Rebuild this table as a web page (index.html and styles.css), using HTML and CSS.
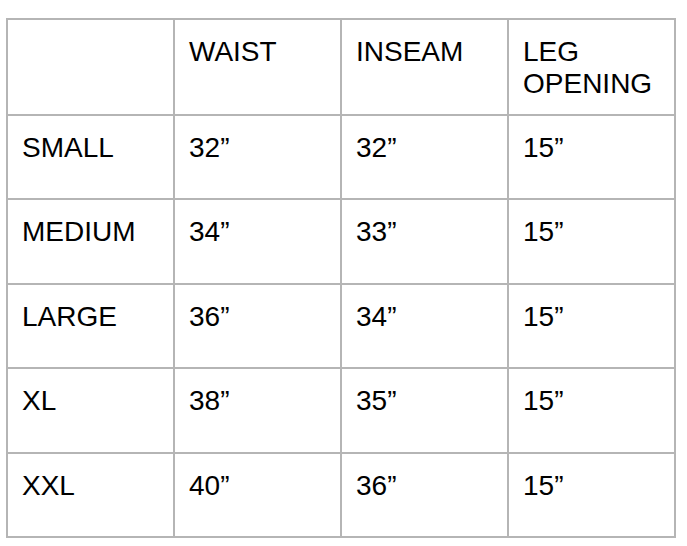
FILE: index.html
```html
<!DOCTYPE html>
<html>
<head>
<meta charset="utf-8">
<link rel="stylesheet" href="styles.css">
</head>
<body>
<div class="size-table">
  <div class="cell"></div>
  <div class="cell">WAIST</div>
  <div class="cell">INSEAM</div>
  <div class="cell">LEG<br>OPENING</div>

  <div class="cell">SMALL</div>
  <div class="cell">32”</div>
  <div class="cell">32”</div>
  <div class="cell">15”</div>

  <div class="cell">MEDIUM</div>
  <div class="cell">34”</div>
  <div class="cell">33”</div>
  <div class="cell">15”</div>

  <div class="cell">LARGE</div>
  <div class="cell">36”</div>
  <div class="cell">34”</div>
  <div class="cell">15”</div>

  <div class="cell">XL</div>
  <div class="cell">38”</div>
  <div class="cell">35”</div>
  <div class="cell">15”</div>

  <div class="cell">XXL</div>
  <div class="cell">40”</div>
  <div class="cell">36”</div>
  <div class="cell">15”</div>
</div>
</body>
</html>
```
FILE: styles.css
```css
html, body {
  margin: 0;
  padding: 0;
  background: #ffffff;
}
body {
  padding: 18px 0 0 6px;
  font-family: "Liberation Sans", Arial, sans-serif;
  color: #000000;
}
.size-table {
  display: grid;
  grid-template-columns: repeat(4, 167px);
  grid-template-rows: 96px 84px 85px 84px 85px 84px;
  width: max-content;
  border-left: 2px solid #b5b5b5;
  border-top: 2px solid #b5b5b5;
}
.cell {
  box-sizing: border-box;
  border-right: 2px solid #b5b5b5;
  border-bottom: 2px solid #b5b5b5;
  padding: 16px 8px 0 14px;
  font-size: 28px;
  line-height: 32px;
}
```
